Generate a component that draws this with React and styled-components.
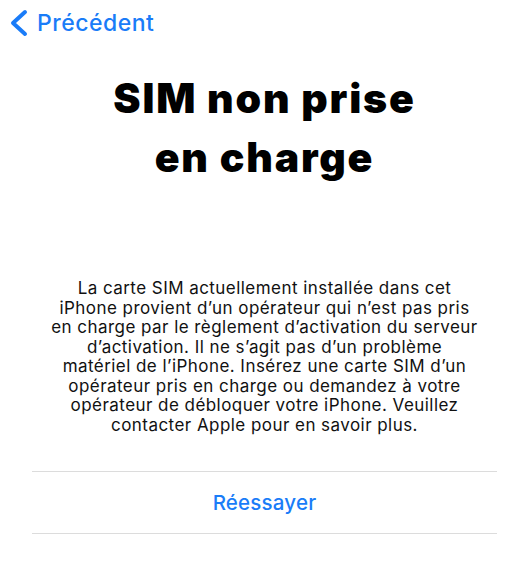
import React from "react";
import styled, { createGlobalStyle } from "styled-components";

const GlobalStyle = createGlobalStyle`
  html, body {
    margin: 0;
    padding: 0;
    background: #fff;
  }
  body {
    font-family: Inter, "Noto Sans", "Liberation Sans", sans-serif;
    -webkit-font-smoothing: antialiased;
  }
`;

const Page = styled.div`
  width: 529px;
  height: 578px;
  display: flex;
  flex-direction: column;
  background: #fff;
`;

const NavBar = styled.div`
  height: 46px;
  display: flex;
  align-items: center;
  padding-left: 9px;
`;

const BackButton = styled.button`
  display: flex;
  align-items: center;
  gap: 8px;
  border: none;
  background: none;
  padding: 0;
  color: #1a7cf8;
  font-family: inherit;
  font-size: 23px;
  font-weight: 500;
  letter-spacing: 0.5px;
  cursor: pointer;
  svg {
    display: block;
  }
`;

const Title = styled.h1`
  margin: 23px 0 0;
  text-align: center;
  color: #000;
  font-size: 41px;
  font-weight: 900;
  line-height: 59px;
  letter-spacing: 1.8px;
`;

const Description = styled.p`
  margin: 92px 0 0;
  text-align: center;
  color: #111;
  font-size: 17px;
  font-weight: 400;
  line-height: 19.5px;
  letter-spacing: 0.45px;
`;

const ActionList = styled.div`
  margin: 36px 32px 0;
  border-top: 1px solid #dcdcdc;
  border-bottom: 1px solid #dcdcdc;
`;

const ActionButton = styled.button`
  width: 100%;
  height: 61px;
  display: flex;
  align-items: center;
  justify-content: center;
  border: none;
  background: none;
  color: #1a7cf8;
  font-family: inherit;
  font-size: 20.5px;
  font-weight: 500;
  letter-spacing: 0.2px;
  cursor: pointer;
`;

const ChevronLeft = () => (
  <svg width="20" height="28" viewBox="0 0 20 28">
    <path
      d="M16 3 L4 14 L16 25"
      fill="none"
      stroke="currentColor"
      strokeWidth="4"
      strokeLinecap="round"
      strokeLinejoin="round"
    />
  </svg>
);

const lines = [
  "La carte SIM actuellement installée dans cet",
  "iPhone provient d’un opérateur qui n’est pas pris",
  "en charge par le règlement d’activation du serveur",
  "d’activation. Il ne s’agit pas d’un problème",
  "matériel de l’iPhone. Insérez une carte SIM d’un",
  "opérateur pris en charge ou demandez à votre",
  "opérateur de débloquer votre iPhone. Veuillez",
  "contacter Apple pour en savoir plus.",
];

const App = () => {
  return (
    <Page>
      <GlobalStyle />
      <NavBar>
        <BackButton>
          <ChevronLeft />
          Précédent
        </BackButton>
      </NavBar>
      <Title>
        SIM non prise
        <br />
        en charge
      </Title>
      <Description>
        {lines.map((line, i) => (
          <React.Fragment key={i}>
            {line}
            {i < lines.length - 1 && <br />}
          </React.Fragment>
        ))}
      </Description>
      <ActionList>
        <ActionButton>Réessayer</ActionButton>
      </ActionList>
    </Page>
  );
};

export default App;
